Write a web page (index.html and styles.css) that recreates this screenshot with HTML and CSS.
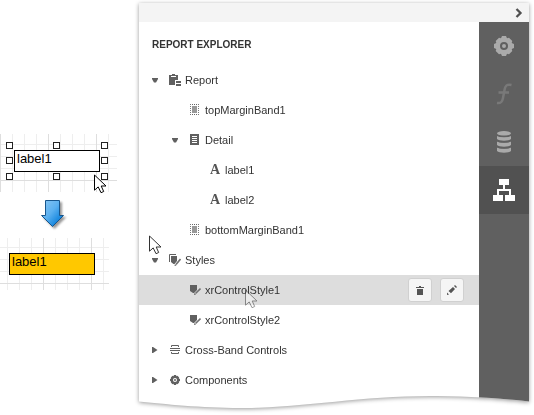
FILE: index.html
```html
<!DOCTYPE html>
<html lang="en">
<head>
<meta charset="utf-8">
<title>Report Explorer</title>
<link rel="stylesheet" href="styles.css">
</head>
<body>
<svg class="defs" width="0" height="0">
  <defs>
    <linearGradient id="blue" x1="0" y1="0" x2="1" y2="1"><stop offset="0" stop-color="#8cc8f4"/><stop offset=".45" stop-color="#5ab0f0"/><stop offset=".8" stop-color="#0f82dc"/><stop offset="1" stop-color="#0868b8"/></linearGradient>
    <clipPath id="torn" clipPathUnits="userSpaceOnUse"><path d="M0 0H390V398.500C370 396 337 393.500 299 393C225 392 165 405 101 405C63 405 25 401 0 398.500Z"/></clipPath>
    <symbol id="cursor" viewBox="0 0 13 20"><path d="M.5 1V16.200L4.200 12.900L7 18.700L9.700 17.500L7.200 12H12Z" fill="#fff" stroke="#000"/></symbol>
    <symbol id="down" viewBox="0 0 6 5"><path d="M0 .5H6V1.500L4 5H2L0 1.500Z"/></symbol>
    <symbol id="right" viewBox="0 0 6 6"><path d="M0 0H1L5.500 3L1 6H0Z"/></symbol>
    <symbol id="margin" viewBox="0 0 10 12"><path d="M2 2H7V9H2Z" fill="#999"/><path d="M0 .5H9M0 10.500H9" stroke="#666" stroke-dasharray="1 1"/><path d="M.5 0V11M8.500 0V11" stroke="#777" stroke-dasharray="1 1"/></symbol>
    <symbol id="style" viewBox="0 0 12 12"><path d="M1 1H8V6L5 9H4L1 7ZM5 11L5.500 9L7 10.500Z"/><path d="M6.500 9.500L11.500 4.500" stroke="#707070" stroke-width="1.600"/></symbol>
    <symbol id="gear" viewBox="0 0 20 20"><path fill-rule="evenodd" d="M8 0H12L13 2.300L15 1.700L18.300 5L17.700 7L20 8V12L17.700 13L18.300 15L15 18.300L13 17.700L12 20H8L7 17.700L5 18.300L1.700 15L2.300 13L0 12V8L2.300 7L1.700 5L5 1.700L7 2.300ZM10 6A4 4 0 1 0 10 14A4 4 0 1 0 10 6ZM10 8A2 2 0 1 1 10 12A2 2 0 1 1 10 8Z"/></symbol>
  </defs>
</svg>
<main class="scene">
  <section class="preview">
    <div class="canvas canvas-plain">
      <div class="label label-plain">label1
        <i class="handle tl"></i><i class="handle tc"></i><i class="handle tr"></i>
        <i class="handle ml"></i><i class="handle mr"></i>
        <i class="handle bl"></i><i class="handle bc"></i><i class="handle br"></i>
      </div>
    </div>
    <svg class="arrow" width="28" height="31" viewBox="0 0 28 31"><path d="M5.500 1.500H19.500V16.500H23.500L12.500 27.500L1.500 16.500H5.500Z" fill="url(#blue)" stroke="#17568d"/></svg>
    <div class="canvas canvas-styled"><div class="label label-styled">label1</div></div>
  </section>
  <section class="shadow">
    <div class="panel">
      <header class="topbar"><svg width="8" height="10" viewBox="0 0 8 10"><path d="M1.500 1L5.500 5L1.500 9" fill="none" stroke="#505050" stroke-width="2.300"/></svg></header>
      <div class="content">
        <div class="explorer">
          <h1>REPORT EXPLORER</h1>
          <ul>
            <li class="l1"><svg class="caret"><use href="#down"/></svg><svg class="icon" viewBox="0 0 12 12"><path d="M0 1H3V0H6V1H9V6H6V11H0Z"/><path d="M2 2.500H7" stroke="#fff"/><path d="M7 7H12V9H7ZM7 10H12V12H7Z"/></svg>Report</li>
            <li class="l2"><svg class="icon narrow"><use href="#margin"/></svg>topMarginBand1</li>
            <li class="l2 parent"><svg class="caret"><use href="#down"/></svg><svg class="icon narrow" viewBox="0 0 10 12"><path d="M0 0H9V11H0Z"/><path d="M2 2.500H7M2 4.500H7M2 6.500H7M2 8.500H7" stroke="#fff"/></svg>Detail</li>
            <li class="l3"><b class="letter">A</b>label1</li>
            <li class="l3"><b class="letter">A</b>label2</li>
            <li class="l2"><svg class="icon narrow"><use href="#margin"/></svg>bottomMarginBand1</li>
            <li class="l1"><svg class="caret"><use href="#down"/></svg><svg class="icon" viewBox="0 0 12 12"><path d="M.5 8V.5H7" fill="none" stroke="#606060"/><path d="M2 2H8V7L5.500 10H4.500L2 8ZM5.500 12L6 10L7.500 11.500Z"/><path d="M7 10.500L11.500 5" stroke="#707070" stroke-width="1.600"/></svg>Styles</li>
            <li class="l2 selected"><svg class="icon"><use href="#style"/></svg>xrControlStyle1
              <span class="actions">
                <button aria-label="Delete"><svg width="8" height="9" viewBox="0 0 8 9"><path d="M3 0H5V1H8V2H0V1H3ZM1 3H7V9H1Z"/></svg></button>
                <button aria-label="Edit"><svg width="10" height="10" viewBox="0 0 10 10"><path d="M1.500 6L6 2L8 4L4 8.200ZM7 1L8 0L10 2L9 3ZM0 7.500L2 9.500L0 10Z"/></svg></button>
              </span>
            </li>
            <li class="l2"><svg class="icon"><use href="#style"/></svg>xrControlStyle2</li>
            <li class="l1"><svg class="caret"><use href="#right"/></svg><svg class="icon" viewBox="0 0 12 12"><path d="M2.500 3V1.500H9.500V3M1 4.500H11M1 6.500H11M2.500 8V9.500H9.500V8" fill="none" stroke="#606060"/></svg>Cross-Band Controls</li>
            <li class="l1"><svg class="caret"><use href="#right"/></svg><svg class="icon gear"><use href="#gear"/></svg>Components</li>
          </ul>
        </div>
        <nav class="tabs">
          <a><svg width="20" height="20" viewBox="0 0 20 20"><use href="#gear"/></svg></a>
          <a class="disabled"><svg width="16" height="22" viewBox="0 0 16 22"><path d="M15.500 2C11 1 9.500 2.500 8.700 6L7 15C6.300 19 5 20.500 1 20M2.500 9.500H13" fill="none" stroke="#797979" stroke-width="2.500"/></svg></a>
          <a><svg width="14" height="22" viewBox="0 0 14 22"><ellipse cx="7" cy="2.300" rx="7" ry="2.300"/><path id="disk" d="M0 4C2 6 12 6 14 4V8C12 10.300 2 10.300 0 8Z"/><use href="#disk" y="6"/><use href="#disk" y="12"/><path d="M0 4.200C2 6 12 6 14 4.200M0 9.700C2 11.500 12 11.500 14 9.700M0 15.700C2 17.500 12 17.500 14 15.700" fill="none" stroke="#606060" stroke-width="1.300"/></svg></a>
          <a class="active"><svg width="22" height="22" viewBox="0 0 22 22"><path d="M6 0H16V6H12V10H18V16H22V22H12V16H16V12H6V16H10V22H0V16H4V10H10V6H6Z"/></svg></a>
        </nav>
      </div>
    </div>
  </section>
  <svg class="cursor first"><use href="#cursor"/></svg>
  <svg class="cursor second"><use href="#cursor"/></svg>
  <svg class="cursor third"><use href="#cursor"/></svg>
</main>
</body>
</html>
```
FILE: styles.css
```css
* { box-sizing: border-box; }
body { margin: 0; background: #fff; color: #333; font: 11px "Liberation Sans", Arial, sans-serif; }
svg { display: block; flex: none; }
.defs { position: absolute; }
.scene { position: relative; display: flex; width: 534px; height: 415px; overflow: hidden; }
.preview { width: 139px; padding-top: 134px; }
.canvas {
  --x: 0px; --y: 0px; --mx: 0px; --my: 0px;
  background-image:
    linear-gradient(90deg, #dedede 1px, transparent 1px),
    linear-gradient(#dedede 1px, transparent 1px),
    linear-gradient(90deg, #eee 1px, transparent 1px),
    linear-gradient(#eee 1px, transparent 1px);
  background-size: 48px 48px, 48px 48px, 12px 12px, 12px 12px;
  background-position: var(--mx) 0, 0 var(--my), var(--x) 0, 0 var(--y);
}
.canvas-plain { --y: 10px; --my: 46px; width: 117px; height: 58px; padding: 16px 0 0 14px; }
.canvas-styled { --x: 7px; --y: 9px; --mx: 43px; --my: 45px; width: 109px; height: 52px; padding: 15px 0 0 9px; }
.label { position: relative; width: 86px; height: 22px; padding-left: 2px; border: 1px solid #000; color: #000; font-size: 13px; line-height: 16px; }
.label-plain { background: #fff; }
.label-styled { background: #ffc800; }
.handle { position: absolute; width: 7px; height: 7px; border: 1px solid #222; background: #fff; }
.tl, .tc, .tr { top: -9px; }
.ml, .mr { top: 6px; }
.bl, .bc, .br { top: 22px; }
.tl, .ml, .bl { left: -9px; }
.tc, .bc { left: 38px; }
.tr, .mr, .br { left: 86px; }
.arrow { margin: 7px 0 8px 40px; filter: drop-shadow(2px 2px 1px #0006); }
.shadow { width: 390px; padding-top: 3px; filter: drop-shadow(0 1px 2px #0006); }
.panel { height: 412px; background: #fff; clip-path: url(#torn); }
.topbar { display: flex; align-items: center; justify-content: flex-end; height: 19px; padding-right: 6px; background: #f4f4f4; }
.content { display: flex; height: 393px; }
.explorer { width: 340px; }
h1 { margin: 0; height: 43px; padding-left: 13px; font-size: 10px; line-height: 46px; }
ul { margin: 0; padding: 0; list-style: none; }
li { display: flex; align-items: center; height: 30px; fill: #606060; white-space: nowrap; }
.l1 { padding-left: 13px; }
.l2 { padding-left: 50px; }
.l2.parent { padding-left: 33px; }
.l3 { padding-left: 71px; }
.caret { width: 6px; height: 6px; margin-right: 11px; }
.parent .caret { margin-right: 12px; }
.icon { width: 12px; height: 12px; margin-right: 4px; }
.icon.narrow { width: 10px; margin: 0 5px 0 1px; }
.parent .icon.narrow { margin-left: 0; }
.icon.gear { width: 10px; height: 10px; margin: 0 5px 0 1px; }
.letter { width: 15px; color: #555; font: bold 14px/14px "Liberation Serif", serif; }
.selected { background: #ddd; }
.actions { display: flex; gap: 8px; margin-left: auto; margin-right: 15px; }
button { display: flex; align-items: center; justify-content: center; width: 24px; height: 24px; padding: 0; border: 1px solid #d0d0d0; border-radius: 3px; background: #f5f5f5; fill: #555; }
.tabs { width: 50px; background: #606060; fill: #aaa; }
.tabs a { display: flex; align-items: center; justify-content: center; height: 48px; }
.tabs .active { background: #515151; fill: #fff; }
.cursor { position: absolute; width: 13px; height: 20px; }
.first { left: 94px; top: 174px; }
.second { left: 149px; top: 235px; opacity: .8; }
.third { left: 245px; top: 289px; opacity: .4; }
```
